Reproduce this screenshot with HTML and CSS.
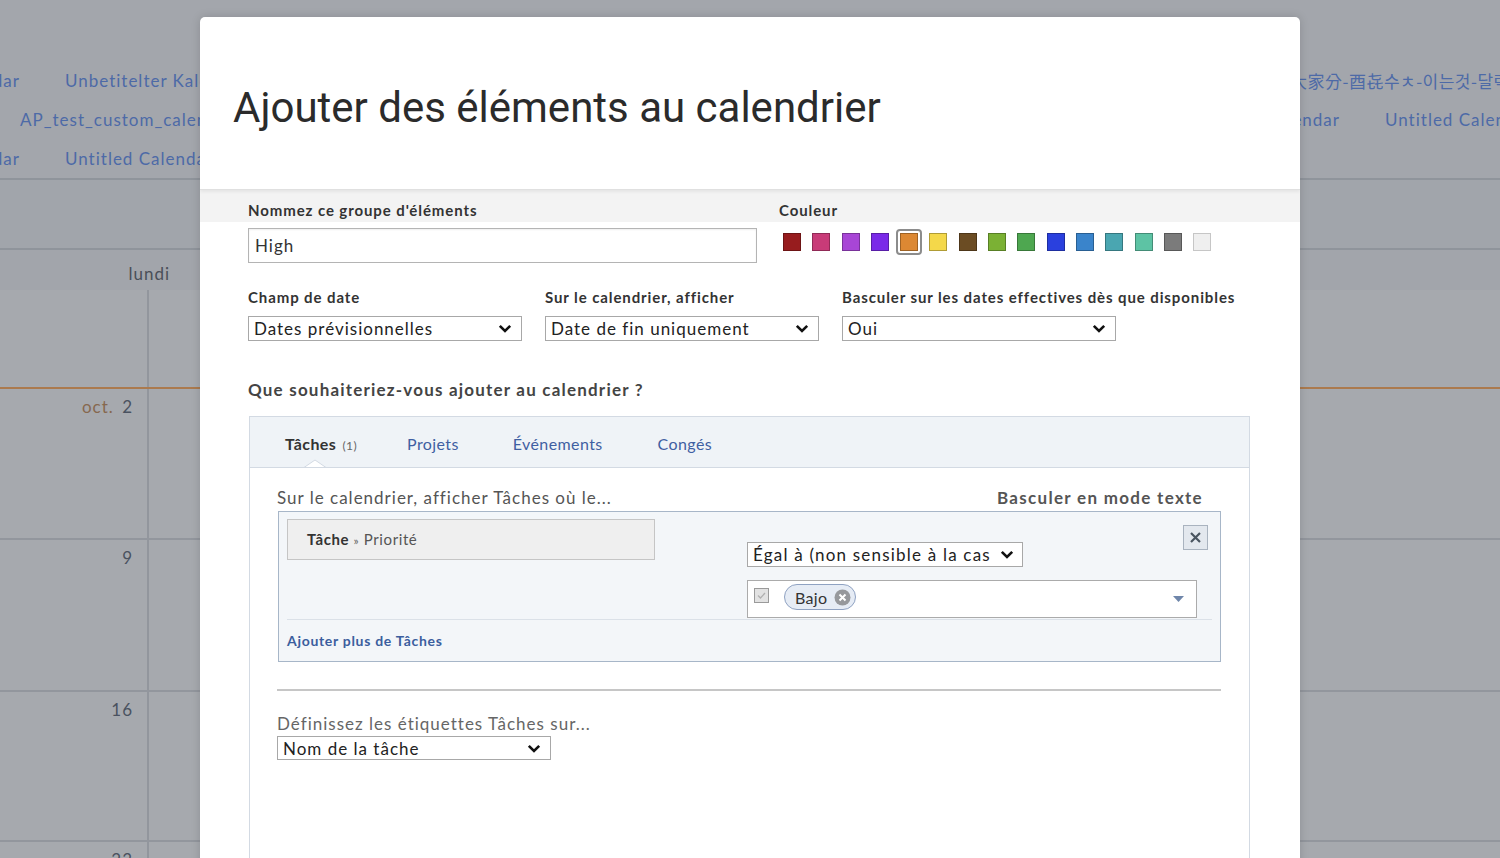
FILE: index.html
```html
<!DOCTYPE html>
<html lang="fr">
<head>
<meta charset="utf-8">
<title>Ajouter des éléments au calendrier</title>
<link rel="stylesheet" href="styles.css">
</head>
<body>
<div class="bg">
  <div class="links">
    <div class="lrow">
      <div class="lhalf"><span class="lead w20"><span>Untitled Calendar</span></span><span>Unbetitelter Kalender</span></div>
      <div class="rhalf"><span class="cjk">大家分-酉㐂수ㅊ-이는것-달력</span></div>
    </div>
    <div class="lrow">
      <div class="lhalf pad20"><span>AP_test_custom_calendar</span></div>
      <div class="rhalf"><span class="lead w50"><span>Untitled Calendar</span></span><span>Untitled Calendar</span></div>
    </div>
    <div class="lrow">
      <div class="lhalf"><span class="lead w20"><span>Untitled Calendar</span></span><span>Untitled Calendar</span></div>
    </div>
  </div>
  <div class="toolbar"></div>
  <div class="weekdays"><span class="wd">lundi</span></div>
  <div class="grid">
    <div class="week wk0"><div class="cell"></div></div>
    <div class="week wk1"><div class="cell"><span class="mon">oct.</span> 2</div></div>
    <div class="week wk2"><div class="cell">9</div></div>
    <div class="week wk3"><div class="cell">16</div></div>
    <div class="week wk4"><div class="cell">23</div></div>
  </div>
</div>

<div class="modal">
  <div class="mhead"><h1>Ajouter des éléments au calendrier</h1></div>
  <div class="strip">
    <div class="flabel">Nommez ce groupe d'éléments</div>
    <div class="flabel">Couleur</div>
  </div>
  <div class="row1">
    <div class="txt">High</div>
    <div class="swatches">
      <span class="sw"><i class="c1"></i></span>
      <span class="sw"><i class="c2"></i></span>
      <span class="sw"><i class="c3"></i></span>
      <span class="sw"><i class="c4"></i></span>
      <span class="sw selected"><i class="c5"></i></span>
      <span class="sw"><i class="c6"></i></span>
      <span class="sw"><i class="c7"></i></span>
      <span class="sw"><i class="c8"></i></span>
      <span class="sw"><i class="c9"></i></span>
      <span class="sw"><i class="c10"></i></span>
      <span class="sw"><i class="c11"></i></span>
      <span class="sw"><i class="c12"></i></span>
      <span class="sw"><i class="c13"></i></span>
      <span class="sw"><i class="c14"></i></span>
      <span class="sw"><i class="c15"></i></span>
    </div>
  </div>
  <div class="row2">
    <div class="fgroup">
      <div class="flabel">Champ de date</div>
      <div class="sel"><span>Dates prévisionnelles</span><svg class="chev" width="14" height="9" viewBox="0 0 14 9"><path d="M1.8 1.8 L7 7 L12.2 1.8" fill="none" stroke="#111" stroke-width="2.6"/></svg></div>
    </div>
    <div class="fgroup">
      <div class="flabel">Sur le calendrier, afficher</div>
      <div class="sel"><span>Date de fin uniquement</span><svg class="chev" width="14" height="9" viewBox="0 0 14 9"><path d="M1.8 1.8 L7 7 L12.2 1.8" fill="none" stroke="#111" stroke-width="2.6"/></svg></div>
    </div>
    <div class="fgroup">
      <div class="flabel">Basculer sur les dates effectives dès que disponibles</div>
      <div class="sel"><span>Oui</span><svg class="chev" width="14" height="9" viewBox="0 0 14 9"><path d="M1.8 1.8 L7 7 L12.2 1.8" fill="none" stroke="#111" stroke-width="2.6"/></svg></div>
    </div>
  </div>
  <div class="question">Que souhaiteriez-vous ajouter au calendrier ?</div>
  <div class="panel">
    <div class="tabs">
      <div class="tab active">Tâches <span class="count">(1)</span><svg class="notch" width="22" height="8" viewBox="0 0 22 8"><path d="M0 8.5 L11 1 L22 8.5" fill="#fff" stroke="#d3dae3" stroke-width="1"/></svg></div>
      <div class="tab t2">Projets</div>
      <div class="tab t3">Événements</div>
      <div class="tab t4">Congés</div>
    </div>
    <div class="pbody">
      <div class="phead"><span>Sur le calendrier, afficher Tâches où le...</span><span class="toggle">Basculer en mode texte</span></div>
      <div class="fbox">
        <div class="cond">
          <div class="field"><b>Tâche</b> <span class="raquo">»</span> Priorité</div>
          <div class="right">
            <div class="oprow">
              <div class="sel opsel"><span>Égal à (non sensible à la cas</span><svg class="chev" width="14" height="9" viewBox="0 0 14 9"><path d="M1.8 1.8 L7 7 L12.2 1.8" fill="none" stroke="#111" stroke-width="2.6"/></svg></div>
              <div class="xbtn"><svg width="13" height="13" viewBox="0 0 13 13"><path d="M2 2 L11 11 M11 2 L2 11" stroke="#4a5560" stroke-width="2.2"/></svg></div>
            </div>
            <div class="valbox">
              <svg class="cbx" width="15" height="15" viewBox="0 0 15 15"><rect x="0.5" y="0.5" width="14" height="14" fill="#e2e2e2" stroke="#9a9a9a"/><path d="M4 7.5 L6.5 10 L11 5" fill="none" stroke="#b0b0b0" stroke-width="1.3"/></svg>
              <span class="chip">Bajo<svg width="17" height="17" viewBox="0 0 17 17"><circle cx="8.5" cy="8.5" r="8" fill="#96989c"/><path d="M5.5 5.5 L11.5 11.5 M11.5 5.5 L5.5 11.5" stroke="#fff" stroke-width="2"/></svg></span>
              <svg class="caret" width="11" height="6" viewBox="0 0 11 6"><path d="M0 0 H11 L5.5 6 Z" fill="#6f86aa"/></svg>
            </div>
          </div>
        </div>
        <div class="add">Ajouter plus de Tâches</div>
      </div>
      <div class="rule"></div>
      <div class="lbl2">Définissez les étiquettes Tâches sur...</div>
      <div class="sel labsel"><span>Nom de la tâche</span><svg class="chev" width="14" height="9" viewBox="0 0 14 9"><path d="M1.8 1.8 L7 7 L12.2 1.8" fill="none" stroke="#111" stroke-width="2.6"/></svg></div>
    </div>
  </div>
</div>
</body>
</html>
```
FILE: styles.css
```css
html, body {
  margin: 0;
  padding: 0;
}
body {
  width: 1500px;
  height: 858px;
  overflow: hidden;
  position: relative;
  font-family: Lato, "Noto Sans", sans-serif;
}

/* ---------- background calendar (dimmed) ---------- */
.bg {
  height: 858px;
  background: #a3a6ac;
  color: #4b5059;
  letter-spacing: 1px;
}
.links {
  height: 180px;
  box-sizing: border-box;
  padding-top: 61px;
  border-bottom: 2px solid #8f949b;
}
.lrow {
  display: flex;
  height: 39px;
  line-height: 39px;
  white-space: nowrap;
  overflow: hidden;
  font-size: 17px;
  color: #4d6aa7;
}
.lhalf {
  width: 1290px;
  flex: none;
  display: flex;
  gap: 45px;
  overflow: hidden;
}
.lhalf.pad20 {
  padding-left: 20px;
  box-sizing: border-box;
}
.rhalf {
  flex: none;
  display: flex;
  gap: 45px;
}
.lead {
  flex: none;
  display: flex;
  justify-content: flex-end;
}
.w20 { width: 20px; }
.w50 { width: 50px; }
.cjk {
  font-family: "Noto Sans CJK KR", "Noto Sans CJK SC", sans-serif;
  letter-spacing: 0.5px;
}
.toolbar {
  height: 68px;
  background: #a1a5ab;
  border-bottom: 2px solid #8f949b;
}
.weekdays {
  height: 40px;
  display: flex;
  background: #a2a5ab;
}
.wd {
  width: 170px;
  text-align: right;
  padding-top: 8px;
  line-height: 32px;
  font-size: 17px;
  color: #4a4f58;
}
.grid {
  background: #a6a9ae;
}
.week {
  display: flex;
  border-bottom: 2px solid #92969d;
}
.wk0 { height: 97px; border-bottom-color: #ab7a4e; }
.wk1 { height: 149px; }
.wk2 { height: 150px; }
.wk3 { height: 148px; }
.wk4 { height: 120px; }
.cell {
  width: 149px;
  box-sizing: border-box;
  border-right: 2px solid #92969d;
  text-align: right;
  padding: 8px 14px 0 0;
  font-size: 17px;
  line-height: 20px;
  color: #4a5260;
}
.mon {
  color: #86684f;
  margin-right: 3px;
}

/* ---------- modal ---------- */
.modal {
  position: absolute;
  left: 200px;
  top: 17px;
  width: 1100px;
  height: 860px;
  background: #fff;
  border-radius: 5px 5px 0 0;
  box-shadow: 0 0 10px rgba(0, 0, 0, 0.15);
  overflow: hidden;
  color: #333;
  letter-spacing: 1px;
}
.mhead {
  height: 173px;
  box-sizing: border-box;
  padding: 67px 0 0 33px;
  border-bottom: 1px solid #e0e0e0;
  box-shadow: 0 2px 3px rgba(0, 0, 0, 0.06);
  position: relative;
  z-index: 1;
}
.mhead h1 {
  margin: 0;
  font-family: Roboto, "Noto Sans", sans-serif;
  font-weight: 400;
  font-size: 42px;
  line-height: 48px;
  letter-spacing: 0;
  color: #2b2b2b;
}
.strip {
  height: 32px;
  box-sizing: border-box;
  background: #f3f3f3;
  display: grid;
  grid-template-columns: 509px 1fr;
  column-gap: 22px;
  padding: 0 48px 3px;
  align-items: end;
}
.flabel {
  font-size: 15px;
  font-weight: 700;
  line-height: 18px;
  color: #333;
  white-space: nowrap;
  letter-spacing: 0.9px;
}
.row1 {
  display: grid;
  grid-template-columns: 509px 1fr;
  column-gap: 22px;
  padding: 6px 48px 0;
}
.txt {
  height: 35px;
  box-sizing: border-box;
  border: 1px solid #b4b4b4;
  box-shadow: inset 0 1px 2px rgba(0, 0, 0, 0.07);
  padding-left: 6px;
  font-size: 17px;
  line-height: 33px;
  color: #333;
}
.swatches {
  display: flex;
  gap: 3.3px;
  padding-top: 1px;
}
.sw {
  width: 26px;
  height: 26px;
  box-sizing: border-box;
  padding: 4px;
  border-radius: 4px;
}
.sw.selected {
  border: 2px solid #8c8c8c;
  padding: 2px;
}
.sw i {
  display: block;
  width: 18px;
  height: 18px;
  box-sizing: border-box;
  border: 1px solid rgba(0, 0, 0, 0.28);
}
.c1 { background: #971c1e; }
.c2 { background: #c83b78; }
.c3 { background: #a846d6; }
.c4 { background: #7a2ae8; }
.c5 { background: #dc8833; }
.c6 { background: #f4d84a; }
.c7 { background: #6b4c23; }
.c8 { background: #7bb134; }
.c9 { background: #4ea750; }
.c10 { background: #2a40de; }
.c11 { background: #3a84cb; }
.c12 { background: #4aa6b1; }
.c13 { background: #5dc3a4; }
.c14 { background: #7b7b7b; }
.sw i.c15 { background: #efefef; border-color: #c6c6c6; }

.row2 {
  display: grid;
  grid-template-columns: 274px 274px 274px;
  column-gap: 23px;
  padding: 25px 48px 0;
}
.sel {
  margin-top: 10px;
  height: 25px;
  box-sizing: border-box;
  border: 1px solid #a8a8a8;
  display: flex;
  align-items: center;
  justify-content: space-between;
  padding: 0 9px 0 5px;
  font-size: 17px;
  color: #222;
  background: #fff;
  white-space: nowrap;
}
.chev {
  flex: none;
}
.question {
  margin: 38px 48px 0;
  font-size: 17px;
  line-height: 22px;
  font-weight: 700;
  color: #444;
  letter-spacing: 1.2px;
}
.panel {
  margin: 15px 50px 0 49px;
  border: 1px solid #d3dae3;
  height: 600px;
}
.tabs {
  height: 51px;
  box-sizing: border-box;
  background: #eff3f7;
  border-bottom: 1px solid #d3dae3;
  display: flex;
  align-items: center;
  padding: 3px 0 0 35px;
  font-size: 16px;
  letter-spacing: 0.4px;
}
.tab {
  position: relative;
  color: #3f5fa2;
}
.tab.active {
  font-weight: 700;
  color: #333;
}
.count {
  font-size: 12px;
  font-weight: 400;
  color: #666;
  margin-left: 2px;
}
.notch {
  position: absolute;
  left: 19px;
  top: 25px;
}
.t2 { margin-left: 50px; }
.t3 { margin-left: 54px; }
.t4 { margin-left: 55px; }
.pbody {
  padding: 19px 28px 0 27px;
}
.phead {
  display: flex;
  justify-content: space-between;
  padding-right: 18px;
  font-size: 17px;
  line-height: 22px;
  color: #555;
}
.toggle {
  font-weight: 700;
  color: #555;
  letter-spacing: 1.3px;
}
.fbox {
  margin-top: 2px;
  margin-left: 1px;
  border: 1px solid #a7b6c8;
  background: #f3f6f9;
  padding: 7px 8px 0;
}
.cond {
  display: flex;
  align-items: flex-start;
  height: 100px;
  border-bottom: 1px solid #dbe1e8;
}
.field {
  width: 368px;
  height: 41px;
  box-sizing: border-box;
  background: #efefef;
  border: 1px solid #c5c5c5;
  padding-left: 19px;
  line-height: 39px;
  font-size: 15px;
  color: #555;
  letter-spacing: 0.6px;
}
.field b {
  color: #333;
}
.raquo {
  font-size: 12px;
  color: #666;
}
.right {
  margin-left: 92px;
  width: 461px;
}
.oprow {
  display: flex;
  justify-content: space-between;
  align-items: flex-start;
}
.opsel {
  margin-top: 23px;
  width: 276px;
  padding-right: 8px;
  letter-spacing: 1.2px;
}
.xbtn {
  margin-top: 6px;
  width: 25px;
  height: 25px;
  box-sizing: border-box;
  background: #e3e8ee;
  border: 1px solid #a9b3bf;
  display: flex;
  align-items: center;
  justify-content: center;
}
.valbox {
  margin-top: 13px;
  width: 450px;
  height: 38px;
  box-sizing: border-box;
  background: #fff;
  border: 1px solid #ababab;
  display: flex;
  align-items: flex-start;
  padding: 3px 0 0 6px;
}
.cbx {
  margin-top: 4px;
  flex: none;
}
.chip {
  margin-left: 15px;
  height: 26px;
  box-sizing: border-box;
  border: 1px solid #8fa2c2;
  background: #e6ecf5;
  border-radius: 13px;
  display: flex;
  align-items: center;
  gap: 7px;
  padding: 0 4px 0 10px;
  font-size: 16px;
  color: #333;
  letter-spacing: 0.3px;
}
.caret {
  margin-left: auto;
  margin-right: 12px;
  margin-top: 12px;
}
.add {
  height: 41px;
  line-height: 41px;
  font-size: 14px;
  font-weight: 700;
  color: #3b5e9e;
  letter-spacing: 0.7px;
}
.rule {
  margin-top: 27px;
  border-top: 2px solid #c6c6c6;
}
.lbl2 {
  margin-top: 22px;
  font-size: 17px;
  line-height: 22px;
  color: #666;
}
.labsel {
  margin-top: 1px;
  width: 274px;
  height: 24px;
}
```
